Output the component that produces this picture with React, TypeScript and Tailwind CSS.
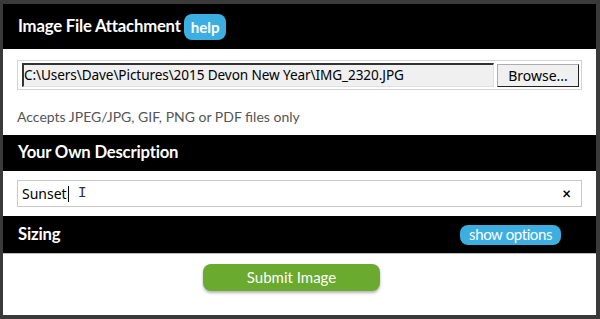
import React from 'react';

const Header: React.FC<{ title: string; children?: React.ReactNode; className?: string }> = ({ title, children, className }) => (
  <div className={`bg-black flex items-center px-[15px] ${className ?? ''}`}>
    <h2 className="text-white font-bold text-[16.7px] tracking-[-0.2px]">{title}</h2>
    {children}
  </div>
);

export default function App() {
  return (
    <div
      className="w-[600px] h-[319px] bg-[#3a3a3a] pt-[4px] pl-[3px] pr-[4px] pb-[4px]"
      style={{ fontFamily: 'Lato, "Open Sans", sans-serif' }}
    >
      <div className="bg-white h-full flex flex-col">
        {/* Image attachment */}
        <Header title="Image File Attachment" className="h-[45px]">
          <span className="ml-[3px] bg-[#3daee0] text-white text-[15px] font-bold rounded-[8px] px-[7px] h-[26px] leading-[26px]">
            help
          </span>
        </Header>
        <div className="h-[86px] px-[14px] pt-[11px]">
          <div className="border border-[#d4d4d4] h-[30px] flex items-center pl-[4px] pr-[2px] gap-[3px]">
            <div
              className="flex-1 h-[24px] bg-[#f0f0f0] border-t-2 border-l-2 border-[#333] border-b border-r border-b-[#e0e0e0] border-r-[#e0e0e0] flex items-center text-[13.6px] text-black tracking-[-0.1px]"
              style={{ fontFamily: '"Noto Sans", "Open Sans", sans-serif' }}
            >
              C:\Users\Dave\Pictures\2015 Devon New Year\IMG_2320.JPG
            </div>
            <div
              className="w-[82px] h-[23px] bg-[#f0f0f0] border border-[#adadad] border-b-[#222] border-r-[#222] flex items-center justify-center text-[14px] text-black"
              style={{ fontFamily: '"Noto Sans", "Open Sans", sans-serif' }}
            >
              Browse...
            </div>
          </div>
          <p className="text-[#555] text-[14px] mt-[16px]">Accepts JPEG/JPG, GIF, PNG or PDF files only</p>
        </div>

        {/* Description */}
        <Header title="Your Own Description" className="h-[36px]" />
        <div className="h-[45px] px-[14px] pt-[9px]">
          <div className="border border-[#c8c8c8] h-[27px] flex items-center pl-[4px] pr-[10px]">
            <span className="text-[14px] text-black" style={{ fontFamily: '"Noto Sans", "Open Sans", sans-serif' }}>
              Sunset
            </span>
            <span className="w-px h-[16px] bg-black ml-[1px]" />
            <span className="ml-[9px] text-[15px] text-[#333] leading-none" style={{ fontFamily: '"Liberation Mono", monospace' }}>
              I
            </span>
            <span className="ml-auto text-[15px] font-bold text-black leading-none">×</span>
          </div>
        </div>

        {/* Sizing */}
        <Header title="Sizing" className="h-[37px] pr-[35px]">
          <span className="ml-auto bg-[#3daee0] text-white text-[15px] rounded-[8px] px-[9px] h-[20px] leading-[19px] tracking-[-0.4px]">
            show options
          </span>
        </Header>
        <div className="flex-1 flex justify-center pt-[10px] pr-[16px] border-t border-[#bbb]">
          <button className="w-[177px] h-[27px] bg-[#69aa2f] text-white text-[15px] rounded-[8px] shadow-[0_2px_3px_rgba(0,0,0,0.3)]">
            Submit Image
          </button>
        </div>
      </div>
    </div>
  );
}
